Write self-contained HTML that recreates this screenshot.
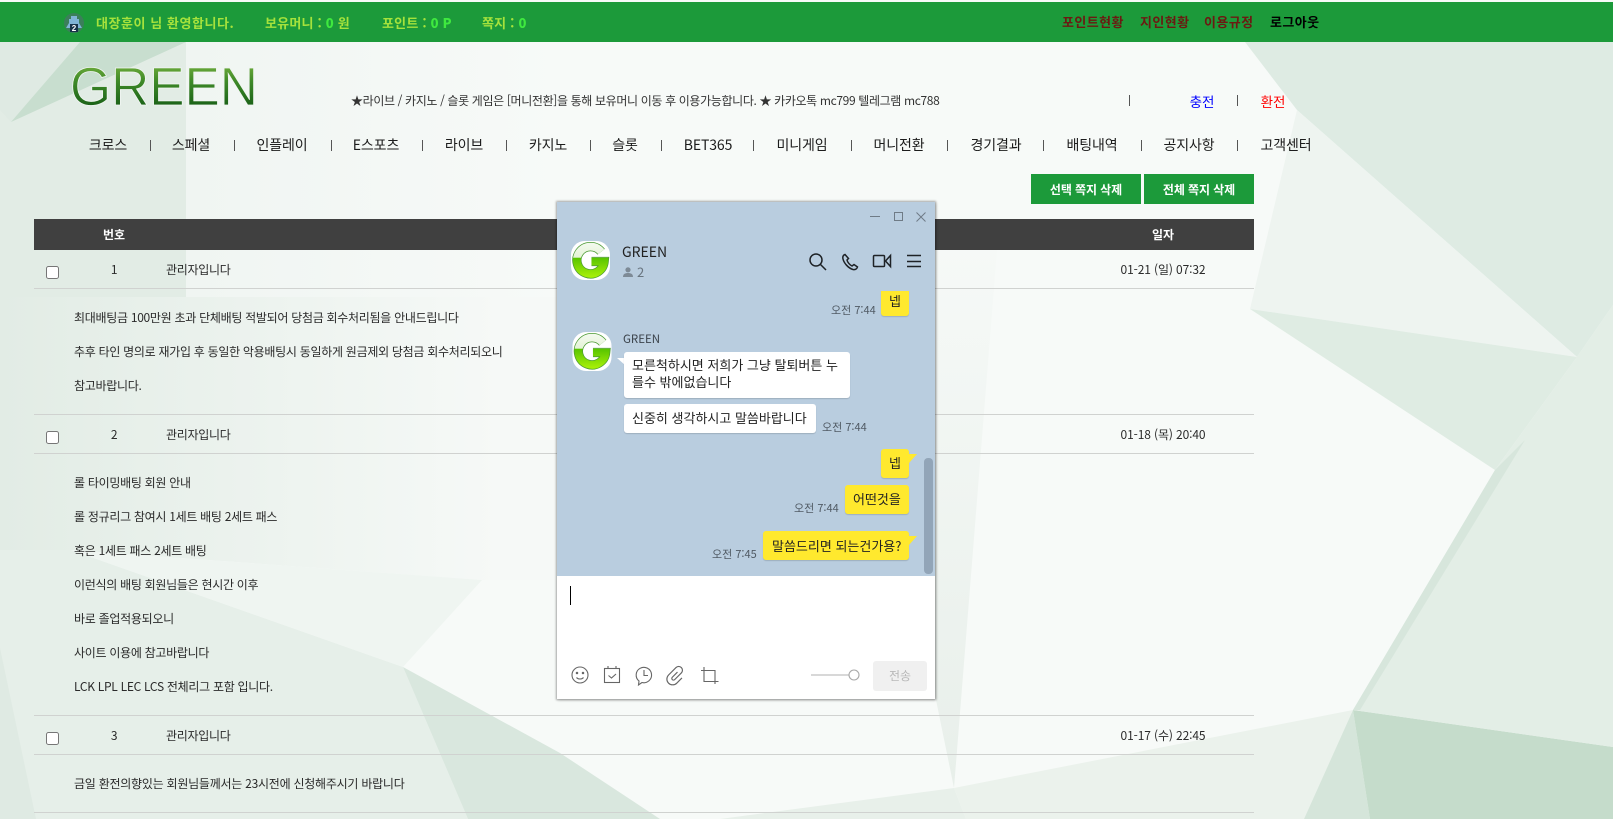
<!DOCTYPE html>
<html lang="ko"><head><meta charset="utf-8"><title>GREEN</title>
<style>
html,body{margin:0;padding:0;width:1613px;height:819px;overflow:hidden;background:#f7faf8}
body{position:relative;font-family:"Liberation Sans","Noto Sans CJK KR",sans-serif;font-size:12px;color:#222}
.kr{font-family:"Noto Sans CJK KR","Liberation Sans",sans-serif}
.t{position:absolute;line-height:20px;white-space:nowrap;font-family:"Noto Sans CJK KR","Liberation Sans",sans-serif}
.c{transform:translateX(-50%)}
.bgsvg{position:absolute;left:0;top:0}
.bar{position:absolute;left:0;top:2px;width:1613px;height:40px;background:#1c9a3a}
.bt{font-weight:700;color:#a6e23c;font-size:13px;letter-spacing:.2px}
.bt b{color:#3fe93f}
.br{font-weight:700;color:#6b1a12;font-size:13px;letter-spacing:.4px}
.nav{font-size:14px;color:#1c1c1c;letter-spacing:-.1px}
.sep{position:absolute;width:1px;height:11px;background:#555}
.btn{position:absolute;top:174px;height:30px;background:#1c9a3a;color:#fff;font-weight:700;font-size:12px;letter-spacing:-.1px;text-align:center;line-height:31px;font-family:"Noto Sans CJK KR",sans-serif}
.head{position:absolute;left:34px;top:219px;width:1220px;height:31px;background:#404040}
.hl{position:absolute;left:34px;width:1220px;height:1px;background:#d0d2d0}
.cb{position:absolute;left:46px;width:13px;height:13px;margin:0}
.row{font-size:12px;color:#2a2a2a;letter-spacing:-.29px}
.dt{letter-spacing:-.12px}
.win{position:absolute;left:557px;top:202px;width:378px;height:497px;background:#fff;box-shadow:0 0 2px 1px rgba(0,0,0,.3),1px 1px 3px rgba(0,0,0,.2);overflow:hidden}
.chat{position:absolute;left:0;top:0;width:378px;height:374px;background:#b9cddf}
.b{position:absolute;border-radius:3px;box-shadow:0 1px 1px rgba(0,0,0,.15)}
.y{background:#ffe92e}.w{background:#fff}
.m{font-size:13px;color:#222;letter-spacing:0}
.tm{font-size:11px;color:#505a64;letter-spacing:0}
.scroll{position:absolute;left:367px;top:256px;width:9px;height:116px;border-radius:4px;background:#92a5b8}
</style></head><body>
<svg class="bgsvg" width="1613" height="819" viewBox="0 0 1613 819">
<defs>
<linearGradient id="mid" gradientUnits="userSpaceOnUse" x1="186" x2="560" y1="0" y2="0"><stop offset="0" stop-color="#f0f5f2"/><stop offset="1" stop-color="#f7faf8"/></linearGradient>
<linearGradient id="lmid" gradientUnits="userSpaceOnUse" x1="0" x2="500" y1="0" y2="0"><stop offset="0" stop-color="#e2ece5"/><stop offset="1" stop-color="#f6f9f7"/></linearGradient>
<linearGradient id="wedge" gradientUnits="userSpaceOnUse" x1="0" x2="0" y1="200" y2="790"><stop offset="0" stop-color="#f7faf8"/><stop offset="1" stop-color="#e8efea"/></linearGradient>
<linearGradient id="lg" x1="0" x2="0" y1="0" y2="1"><stop offset="0" stop-color="#84bb45"/><stop offset=".4" stop-color="#3f8a28"/><stop offset="1" stop-color="#0a5010"/></linearGradient>
</defs>
<rect width="1613" height="819" fill="#f7faf8"/>
<polygon points="186,42 560,42 560,297 186,297" fill="url(#mid)"/>
<polygon points="0,42 186,42 186,297 0,297" fill="#e2ece5"/>
<polygon points="0,297 560,297 560,580 482,580 71,550 0,550" fill="url(#lmid)"/>
<polygon points="0,550 71,550 403,667 468,819 0,819" fill="#e6efe9"/>
<polygon points="71,550 482,580 403,667" fill="#eff5f1"/>
<polygon points="0,110 11,122 80,42 0,42" fill="#dfeae3"/>
<polygon points="80,42 186,42 11,122" fill="#c8decf"/>
<polygon points="0,648 36,819 0,819" fill="#dfeae3"/>
<polygon points="403,667 560,753 660,819 468,819" fill="#d9e7de"/>
<polygon points="1001,200 954,788 936,700 900,200" fill="url(#wedge)"/>
<polygon points="954,788 720,819 966,819" fill="#e8f0ea"/>
<polygon points="954,788 1353,710 1304,819 966,819" fill="#ebf2ec"/>
<polygon points="1353,710 1370,819 1304,819" fill="#d5e5da"/>
<polygon points="1353,710 1613,747 1613,819 1370,819" fill="#c5dccb"/>
<polygon points="1245,42 1613,42 1613,305 1577,357 1297,110" fill="#deebe3"/>
<polygon points="1297,110 1577,357 1250,309" fill="#eef4f0"/>
<polygon points="1250,309 1577,357 1495,470" fill="#dfece3"/>
<polygon points="1577,357 1613,305 1613,747 1353,710 1495,470" fill="#e3eee6"/>
<polygon points="1495,470 1525,440 1360,710 1353,710" fill="#d7e6dc"/>
<text x="70" y="105" font-family="Liberation Sans" font-size="54" textLength="188" lengthAdjust="spacingAndGlyphs" fill="url(#lg)" stroke="#f0f5f2" stroke-width=".8" paint-order="fill stroke">GREEN</text>
</svg>

<div class="bar"></div>
<svg style="position:absolute;left:63px;top:12px" width="22" height="22" viewBox="0 0 22 22"><circle cx="11" cy="11" r="10" fill="#3b7f5a"/><path d="M8 4h6v3h2v4l3 5H3l3-5V7h2z" fill="#7fb4d6"/><rect x="7" y="12" width="8" height="8" fill="#17344a"/><text x="11" y="19" text-anchor="middle" font-size="8" font-weight="700" fill="#fff" font-family="Liberation Sans">2</text></svg>
<span class="t bt" style="left:96px;top:13px;letter-spacing:.55px">대장훈이 님 환영합니다.</span>
<span class="t bt" style="left:265px;top:13px">보유머니 : <b>0</b> 원</span>
<span class="t bt" style="left:382px;top:13px">포인트 : <b>0 P</b></span>
<span class="t bt" style="left:482px;top:13px">쪽지 : <b>0</b></span>
<span class="t br" style="left:1062px;top:12px">포인트현황</span>
<span class="t br" style="left:1140px;top:12px">지인현황</span>
<span class="t br" style="left:1204px;top:12px">이용규정</span>
<span class="t br" style="left:1270px;top:12px;color:#000">로그아웃</span>

<span class="t" style="left:351px;top:91px;font-size:12px;color:#333;letter-spacing:-.36px">★라이브 / 카지노 / 슬롯 게임은 [머니전환]을 통해 보유머니 이동 후 이용가능합니다. ★ 카카오톡 mc799 텔레그램 mc788</span>
<i class="sep" style="left:1129px;top:95px"></i>
<span class="t c" style="left:1202px;top:91px;font-size:13.5px;color:#00f">충전</span>
<i class="sep" style="left:1237px;top:95px"></i>
<span class="t c" style="left:1273px;top:91px;font-size:13.5px;color:#f00">환전</span>

<span class="t c nav" style="left:108px;top:135px">크로스</span><i class="sep" style="left:150px;top:140px"></i>
<span class="t c nav" style="left:191px;top:135px">스페셜</span><i class="sep" style="left:234px;top:140px"></i>
<span class="t c nav" style="left:282px;top:135px">인플레이</span><i class="sep" style="left:331px;top:140px"></i>
<span class="t c nav" style="left:376px;top:135px">E스포츠</span><i class="sep" style="left:422px;top:140px"></i>
<span class="t c nav" style="left:464px;top:135px">라이브</span><i class="sep" style="left:506px;top:140px"></i>
<span class="t c nav" style="left:548px;top:135px">카지노</span><i class="sep" style="left:590px;top:140px"></i>
<span class="t c nav" style="left:625px;top:135px">슬롯</span><i class="sep" style="left:661px;top:140px"></i>
<span class="t c nav" style="left:708px;top:135px">BET365</span><i class="sep" style="left:753px;top:140px"></i>
<span class="t c nav" style="left:802px;top:135px">미니게임</span><i class="sep" style="left:851px;top:140px"></i>
<span class="t c nav" style="left:899px;top:135px">머니전환</span><i class="sep" style="left:947px;top:140px"></i>
<span class="t c nav" style="left:996px;top:135px">경기결과</span><i class="sep" style="left:1043px;top:140px"></i>
<span class="t c nav" style="left:1092px;top:135px">배팅내역</span><i class="sep" style="left:1141px;top:140px"></i>
<span class="t c nav" style="left:1189px;top:135px">공지사항</span><i class="sep" style="left:1237px;top:140px"></i>
<span class="t c nav" style="left:1286px;top:135px">고객센터</span>

<div class="btn" style="left:1031px;width:110px">선택 쪽지 삭제</div>
<div class="btn" style="left:1144px;width:110px">전체 쪽지 삭제</div>

<div class="head"></div>
<span class="t c" style="left:114px;top:225px;color:#fff;font-weight:700">번호</span>
<span class="t c" style="left:1163px;top:225px;color:#fff;font-weight:700">일자</span>

<input class="cb" type="checkbox" style="top:266px">
<span class="t c row" style="left:114px;top:260px">1</span>
<span class="t row" style="left:166px;top:260px">관리자입니다</span>
<span class="t c row dt" style="left:1163px;top:260px">01-21 (일) 07:32</span>
<div class="hl" style="top:288px"></div>
<span class="t row" style="left:74px;top:308px">최대배팅금 100만원 초과 단체배팅 적발되어 당첨금 회수처리됨을 안내드립니다</span>
<span class="t row" style="left:74px;top:342px">추후 타인 명의로 재가입 후 동일한 악용배팅시 동일하게 원금제외 당첨금 회수처리되오니</span>
<span class="t row" style="left:74px;top:376px">참고바랍니다.</span>
<div class="hl" style="top:414px"></div>

<input class="cb" type="checkbox" style="top:431px">
<span class="t c row" style="left:114px;top:425px">2</span>
<span class="t row" style="left:166px;top:425px">관리자입니다</span>
<span class="t c row dt" style="left:1163px;top:425px">01-18 (목) 20:40</span>
<div class="hl" style="top:453px"></div>
<span class="t row" style="left:74px;top:473px">롤 타이밍배팅 회원 안내</span>
<span class="t row" style="left:74px;top:507px">롤 정규리그 참여시 1세트 배팅 2세트 패스</span>
<span class="t row" style="left:74px;top:541px">혹은 1세트 패스 2세트 배팅</span>
<span class="t row" style="left:74px;top:575px">이런식의 배팅 회원님들은 현시간 이후</span>
<span class="t row" style="left:74px;top:609px">바로 졸업적용되오니</span>
<span class="t row" style="left:74px;top:643px">사이트 이용에 참고바랍니다</span>
<span class="t row" style="left:74px;top:677px">LCK LPL LEC LCS 전체리그 포함 입니다.</span>
<div class="hl" style="top:715px"></div>

<input class="cb" type="checkbox" style="top:732px">
<span class="t c row" style="left:114px;top:726px">3</span>
<span class="t row" style="left:166px;top:726px">관리자입니다</span>
<span class="t c row dt" style="left:1163px;top:726px">01-17 (수) 22:45</span>
<div class="hl" style="top:754px"></div>
<span class="t row" style="left:74px;top:774px;letter-spacing:-.25px">금일 환전의향있는 회원님들께서는 23시전에 신청해주시기 바랍니다</span>
<div class="hl" style="top:812px"></div>

<div class="win">
 <div class="chat">
  <svg style="position:absolute;left:0;top:0" width="378" height="90" fill="none">
   <path d="M313 14.500h10" stroke="#6f7b86"/>
   <rect x="337.500" y="10.500" width="8" height="8" stroke="#6f7b86"/>
   <path d="M359.500 10.500l9 9M368.500 10.500l-9 9" stroke="#6f7b86"/>
   <g stroke="#1e2226" stroke-width="1.500">
    <circle cx="259" cy="58" r="6"/><path d="M263.500 62.500l5.500 5.500"/>
    <path d="M288 52.500c-2 .5-2.500 2.500-2 4.500 1 4 5 9 10 10.500 2 .5 4-.5 4.500-2.500l-3.500-2.500-2 1.500c-2-1-4.500-3.500-5-6l1.500-1.500z"/>
    <rect x="316.500" y="53.500" width="11" height="11" rx="1"/><path d="M333.500 53.500v11l-5-5.500z"/>
    <path d="M350 53.500h14M350 59.500h14M350 64.500h14"/>
   </g>
  </svg>
  <svg style="position:absolute;left:14px;top:39px" width="39" height="39" viewBox="0 0 40 40"><defs><linearGradient id="gg" gradientUnits="userSpaceOnUse" x1="0" x2="0" y1="4" y2="36"><stop offset="0" stop-color="#f2f9ec"/><stop offset=".40" stop-color="#e4f3d6"/><stop offset=".42" stop-color="#58c400"/><stop offset="1" stop-color="#a4ee08"/></linearGradient></defs><rect width="40" height="40" rx="14" fill="#fff"/><path d="M31 11A14 14 0 1 0 34 21H21" fill="none" stroke="#4b9a33" stroke-width="9.500"/><path d="M31 11A14 14 0 1 0 34 21H21" fill="none" stroke="url(#gg)" stroke-width="8"/></svg>
  <span class="t kr" style="left:65px;top:40px;font-size:14px;color:#222">GREEN</span>
  <svg style="position:absolute;left:66px;top:65px" width="10" height="10" viewBox="0 0 10 10"><circle cx="5" cy="2.800" r="2.600" fill="#7d8a96"/><path d="M0 10c0-3 2-4 5-4s5 1 5 4z" fill="#7d8a96"/></svg>
  <span class="t" style="left:80px;top:60px;font-size:13px;color:#68747f">2</span>

  <div style="position:absolute;left:0;top:89px;width:378px;height:285px;overflow:hidden">
   <div class="b y" style="left:324px;top:-20px;width:28px;height:45px"></div>
   <span class="t c m" style="left:338px;top:0">넵</span>
   <span class="t tm" style="left:274px;top:9px">오전 7:44</span>

   <svg style="position:absolute;left:15px;top:41px" width="40" height="39" viewBox="0 0 40 40"><rect width="40" height="40" rx="14" fill="#fff"/><path d="M31 11A14 14 0 1 0 34 21H21" fill="none" stroke="#4b9a33" stroke-width="9.500"/><path d="M31 11A14 14 0 1 0 34 21H21" fill="none" stroke="url(#gg)" stroke-width="8"/></svg>
   <span class="t" style="left:66px;top:38px;font-size:11.500px;color:#3c444c">GREEN</span>
   <svg style="position:absolute;left:60px;top:67px" width="8" height="7"><path d="M0 0L8 0 8 7z" fill="#fff"/></svg>
   <div class="b w" style="left:67px;top:61px;width:226px;height:46px"></div>
   <span class="t m" style="left:75px;top:64px">모른척하시면 저희가 그냥 탈퇴버튼 누</span>
   <span class="t m" style="left:75px;top:81px">를수 밖에없습니다</span>
   <div class="b w" style="left:67px;top:113px;width:192px;height:29px"></div>
   <span class="t m" style="left:75px;top:117px">신중히 생각하시고 말씀바랍니다</span>
   <span class="t tm" style="left:265px;top:126px">오전 7:44</span>

   <div class="b y" style="left:324px;top:158px;width:28px;height:29px"></div>
   <svg style="position:absolute;left:352px;top:163px" width="8" height="9"><path d="M0 0H8L0 9z" fill="#ffe92e"/></svg>
   <span class="t c m" style="left:338px;top:162px">넵</span>

   <div class="b y" style="left:288px;top:194px;width:64px;height:29px"></div>
   <span class="t m" style="left:296px;top:198px">어떤것을</span>
   <span class="t tm" style="left:237px;top:207px">오전 7:44</span>

   <div class="b y" style="left:206px;top:240px;width:146px;height:29px"></div>
   <svg style="position:absolute;left:352px;top:245px" width="8" height="9"><path d="M0 0H8L0 9z" fill="#ffe92e"/></svg>
   <span class="t m" style="left:215px;top:245px">말씀드리면 되는건가용?</span>
   <span class="t tm" style="left:155px;top:253px">오전 7:45</span>
  </div>
  <div class="scroll"></div>
 </div>

 <div style="position:absolute;left:13px;top:384px;width:1px;height:19px;background:#000"></div>

 <svg style="position:absolute;left:0;top:455px" width="378" height="42" fill="none" stroke="#666" stroke-width="1.100">
  <circle cx="23" cy="18" r="8"/><circle cx="20" cy="16" r=".7" fill="#666"/><circle cx="26" cy="16" r=".7" fill="#666"/><path d="M19.500 20.500c1.500 2 5.500 2 7 0"/>
  <rect x="47.500" y="11.500" width="15" height="14"/><path d="M51 9v3M59 9v3M51.500 18.500l3 2.500 4.500-4"/>
  <path d="M85 25.500A7.700 7.700 0 1 0 82 24L81.500 28z"/><path d="M87 13v5.500h4"/>
  <g transform="translate(119 18) rotate(45) scale(1.050)"><path d="M-1 -3V4a1.600 1.600 0 0 0 3.200 0V-5a3.600 3.600 0 0 0 -7.200 0V5a5.500 5.500 0 0 0 11 0V-2"/></g>
  <path d="M147 10V24.500H161.500M144 13.500H158V27"/>
  <path d="M254 18h38" stroke="#b0b0b0"/>
  <circle cx="297" cy="18" r="5" fill="#fff" stroke="#a8a8a8"/>
 </svg>
 <div style="position:absolute;left:316px;top:459px;width:54px;height:30px;border-radius:3px;background:#f0f0f0;color:#b9b9b9;text-align:center;line-height:30px;font-size:12px;font-family:'Noto Sans CJK KR',sans-serif">전송</div>
</div>
</body></html>
